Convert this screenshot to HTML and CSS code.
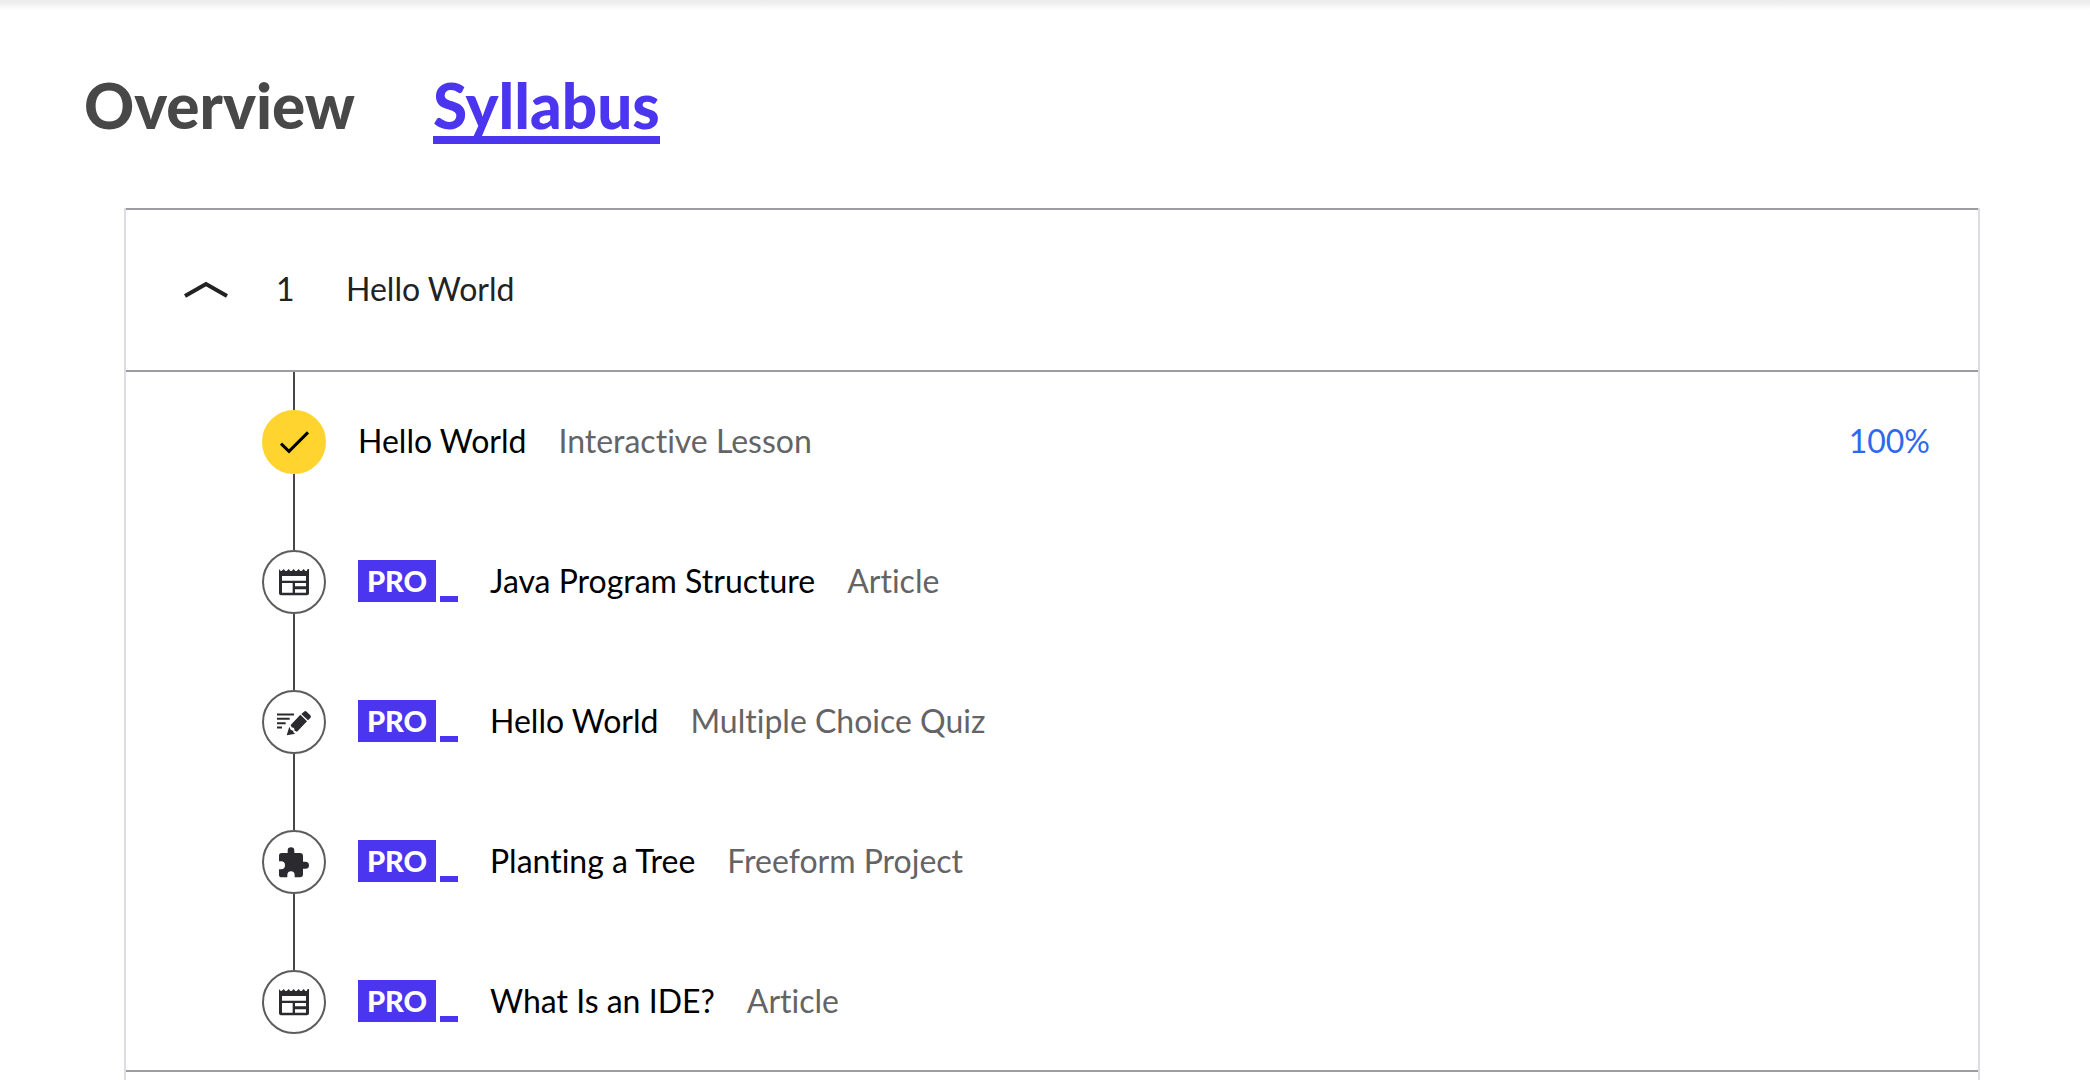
FILE: index.html
```
<!DOCTYPE html>
<html lang="en">
<head>
<meta charset="utf-8">
<meta name="viewport" content="width=device-width, initial-scale=1">
<title>Syllabus</title>
<link rel="stylesheet" href="styles.css">
</head>
<body>
<svg class="sprite" aria-hidden="true">
  <symbol id="check" viewBox="6 6 180 180"><path d="M57 101 81 124 138 67" fill="none" stroke="#000" stroke-width="9"/></symbol>
  <symbol id="article" viewBox="6 6 180 180"><path fill="#2b2b2f" fill-rule="evenodd" d="M51 57l4 5 4 1 6-6 5 6h4l6-6 5 6h4l6-6 5 6h4l6-6 5 6h4l6-6 5 6h4l3-6h4v73q0 6-6 6H57q-6 0-6-6zM60 78v14h72V78zM60 99v29h32V99zM99 99v10h33V99zM99 118v10h33v-10z"/></symbol>
  <symbol id="quiz" viewBox="6 6 180 180"><path d="M45 73.500h51M45 86.500h38M45 99.500h26M45 112.500h15" stroke="#2b2b2f" stroke-width="6"/><path fill="#2b2b2f" d="M126 65q4-4 8 0l11 11q4 4 0 8l-7 7-20-19zM115 74l20 20-30 31-7-3-2-8-7-2-3-7zM82 110l4 9 7 3 3 8 5 1-27 5z"/></symbol>
  <symbol id="project" viewBox="6 6 180 180"><path fill="#2b2b2f" d="M59 69h18v-7q0-10 10-10t10 10v7h17q9 0 9 9v17h7q11 0 11 10.500T130 116h-7v17q0 9-9 9h-16v-6q0-12-11-12t-11 12v6H59q-8 0-8-8v-16h6q12 0 12-12T57 94h-6V77q0-8 8-8z"/></symbol>
</svg>
<div class="top-shadow"></div>
<nav class="tabs" aria-label="Course">
  <a class="tab" href="#overview">Overview</a>
  <a class="tab tab-active" href="#syllabus" aria-current="page">Syllabus</a>
</nav>
<main class="panel" id="syllabus">
  <button class="unit" type="button" aria-expanded="true" aria-controls="lessons">
    <svg class="chevron" viewBox="0 0 44 18" aria-hidden="true"><path d="M1 15 22 3 43 15" fill="none" stroke="#222" stroke-width="4"/></svg>
    <span class="unit-number">1</span>
    <span class="name">Hello World</span>
  </button>
  <ul class="lessons" id="lessons">
    <li><a class="lesson" href="#hello-world">
      <span class="marker"><span class="circle done"><svg aria-hidden="true"><use href="#check"/></svg></span></span>
      <span class="name">Hello World</span><span class="kind">Interactive Lesson</span><span class="progress">100%</span>
    </a></li>
    <li><a class="lesson" href="#java-program-structure">
      <span class="marker"><span class="circle"><svg aria-hidden="true"><use href="#article"/></svg></span></span>
      <span class="pro"><span class="pro-label">PRO</span></span><span class="name">Java Program Structure</span><span class="kind">Article</span>
    </a></li>
    <li><a class="lesson" href="#hello-world-quiz">
      <span class="marker"><span class="circle"><svg aria-hidden="true"><use href="#quiz"/></svg></span></span>
      <span class="pro"><span class="pro-label">PRO</span></span><span class="name">Hello World</span><span class="kind">Multiple Choice Quiz</span>
    </a></li>
    <li><a class="lesson" href="#planting-a-tree">
      <span class="marker"><span class="circle"><svg aria-hidden="true"><use href="#project"/></svg></span></span>
      <span class="pro"><span class="pro-label">PRO</span></span><span class="name">Planting a Tree</span><span class="kind">Freeform Project</span>
    </a></li>
    <li><a class="lesson" href="#what-is-an-ide">
      <span class="marker"><span class="circle"><svg aria-hidden="true"><use href="#article"/></svg></span></span>
      <span class="pro"><span class="pro-label">PRO</span></span><span class="name">What Is an IDE?</span><span class="kind">Article</span>
    </a></li>
  </ul>
</main>
</body>
</html>
```
FILE: styles.css
```
* {
  box-sizing: border-box;
}

body {
  margin: 0;
  min-height: 100vh;
  display: flex;
  flex-direction: column;
  background: #fff;
  color: #000;
  font: 32px/40px Lato, "Noto Sans", sans-serif;
  font-variant-ligatures: none;
}

.sprite {
  display: none;
}

.top-shadow {
  height: 10px;
  background: linear-gradient(#ebebeb, #efefef 30%, #fff);
}

.tabs {
  display: flex;
  gap: 78px;
  padding: 62px 84px 64px;
}

.tab {
  height: 72px;
  border-bottom: 8px solid transparent;
  color: #484848;
  font-size: 62px;
  font-weight: 900;
  line-height: 66px;
  text-decoration: none;
}

.tab-active {
  border-color: #4b35ef;
  color: #4b35ef;
}

.panel {
  flex: 1;
  margin: 0 110px 0 124px;
  border: solid #dcdce3;
  border-width: 0 2px;
}

.unit {
  display: flex;
  align-items: center;
  width: 100%;
  height: 164px;
  padding: 0 58px;
  border: solid #9d9ca3;
  border-width: 2px 0;
  background: none;
  color: #222;
  font: inherit;
  font-variant-ligatures: inherit;
  text-align: left;
}

.chevron {
  width: 44px;
  height: 18px;
  margin-right: 48px;
}

.unit-number {
  width: 70px;
}

.unit-number,
.name,
.kind,
.progress,
.pro {
  padding-bottom: 2px;
}

.lessons {
  margin: 0;
  padding: 0;
  box-shadow: inset 0 -2px #9d9ca3;
  list-style: none;
}

.lesson {
  display: flex;
  align-items: center;
  gap: 32px;
  height: 140px;
  padding: 0 48px 0 136px;
  color: inherit;
  text-decoration: none;
}

/* Timeline: a line above and below each status circle */
.marker {
  display: flex;
  flex-direction: column;
  align-items: center;
  align-self: stretch;
}

.marker::before,
.marker::after {
  content: "";
  flex: 1;
  width: 2px;
  background: #484848;
}

li:last-child .marker::after {
  background: none;
}

.circle {
  width: 64px;
  height: 64px;
  border: 2px solid #5c5c5e;
  border-radius: 50%;
}

.circle svg {
  display: block;
  width: 60px;
  height: 60px;
}

.done {
  border-color: #ffd42e;
  background: #ffd42e;
}

.pro {
  display: flex;
  align-items: flex-end;
  gap: 4px;
}

.pro-label {
  width: 78px;
  height: 42px;
  background: #4b35ef;
  color: #fff;
  font-size: 29px;
  font-weight: 900;
  line-height: 42px;
  text-align: center;
}

.pro::after {
  content: "";
  width: 18px;
  height: 6px;
  background: #4b35ef;
}

.kind {
  color: #646466;
}

.progress {
  margin-left: auto;
  color: #2d68ee;
}
```
